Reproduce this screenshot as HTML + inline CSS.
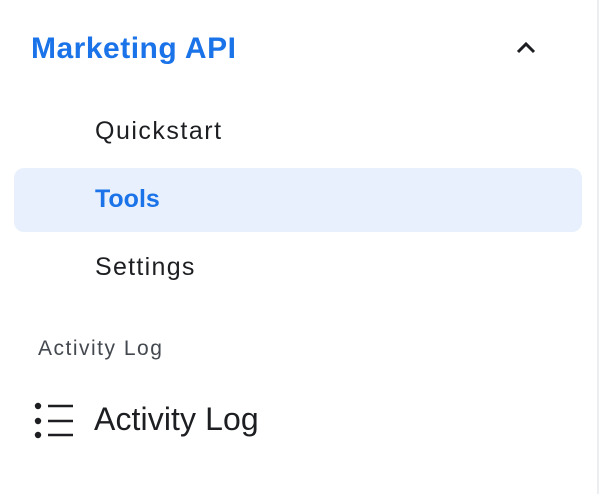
<!DOCTYPE html>
<html><head><style>
body{margin:0;width:600px;height:494px;background:#fff;position:relative;overflow:hidden;font-family:"Liberation Sans",Arial,sans-serif}
.t{position:absolute;white-space:nowrap;line-height:1}
</style></head><body>
<div style="position:absolute;left:597px;top:0;width:2px;height:494px;background:#eceef1"></div>
<div class="t" style="left:31px;top:34px;font-size:30px;font-weight:bold;color:#1a73e8;letter-spacing:0.5px">Marketing API</div>
<svg style="position:absolute;left:514px;top:40px" width="24" height="16"><path d="M4 12 L12 4 L20 12" fill="none" stroke="#1c1e21" stroke-width="3"/></svg>
<div class="t" style="left:95px;top:119px;font-size:25px;color:#1c1e21;letter-spacing:1.5px">Quickstart</div>
<div style="position:absolute;left:14px;top:168px;width:568px;height:64px;border-radius:10px;background:#e8f0fd"></div>
<div class="t" style="left:95px;top:187px;font-size:25px;font-weight:bold;color:#1a73e8">Tools</div>
<div class="t" style="left:95px;top:255px;font-size:25px;color:#1c1e21;letter-spacing:1.3px">Settings</div>
<div class="t" style="left:38px;top:338px;font-size:21px;color:#444950;letter-spacing:1.5px">Activity Log</div>
<svg style="position:absolute;left:32px;top:400px" width="44" height="42">
<circle cx="6" cy="6" r="3.2" fill="#1c1e21"/><circle cx="6" cy="21" r="3.2" fill="#1c1e21"/><circle cx="6" cy="35" r="3.2" fill="#1c1e21"/>
<path d="M16 6H41M16 21H41M16 35H41" stroke="#1c1e21" stroke-width="2.5"/></svg>
<div class="t" style="left:94px;top:403px;font-size:32px;color:#1c1e21;letter-spacing:0.1px">Activity Log</div>
</body></html>
